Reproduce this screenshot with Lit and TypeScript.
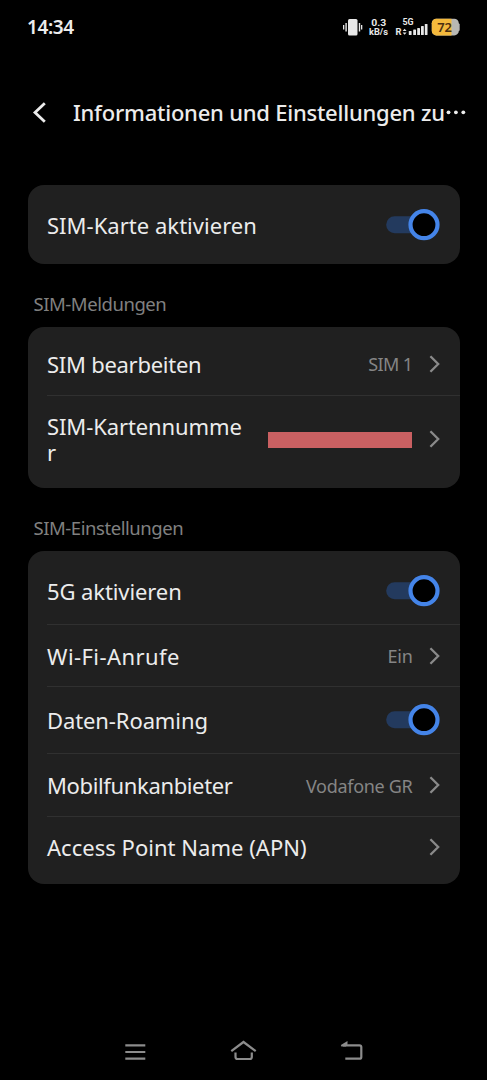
import { LitElement, html, css, nothing } from 'lit';
import { customElement, property } from 'lit/decorators.js';

@customElement('toggle-switch')
export class ToggleSwitch extends LitElement {
  static styles = css`
    :host { display: block; flex: none; }
    svg { display: block; }
  `;
  render() {
    return html`<svg width="54" height="32" viewBox="0 0 54 32">
      <rect x="0.2" y="7.2" width="44" height="17" rx="8.5" fill="#233a5e"></rect>
      <circle cx="38" cy="15.7" r="13.5" fill="#000" stroke="#4484e8" stroke-width="4.2"></circle>
    </svg>`;
  }
}

@customElement('settings-row')
export class SettingsRow extends LitElement {
  @property() kind: 'link' | 'toggle' = 'link';
  @property() value = '';
  @property({ type: Boolean }) redacted = false;

  static styles = css`
    :host { display: flex; align-items: center; box-sizing: border-box; padding-right: 19.5px; height: 62.3px; }
    :host([kind='toggle']) { height: 67px; }
    :host([redacted]) { height: 87.5px; }
    .label { flex: 1; white-space: nowrap; }
    :host([redacted]) .label { flex: none; width: 198px; white-space: normal; word-break: break-all; }
    .value { color: #858585; font-size: 18px; letter-spacing: -0.3px; padding-top: 1px; }
    :host([value='SIM 1']) .value { letter-spacing: -0.6px; }
    .mask { width: 144px; height: 16px; background: #ca6062; margin: 2px 0 0 auto; }
    .chevron { display: block; flex: none; margin-left: 15.5px; margin-right: 0; }
    .mask + .chevron { margin-left: 16px; }
  `;
  render() {
    return html`
      <div class="label"><slot></slot></div>
      ${this.value ? html`<div class="value">${this.value}</div>` : nothing}
      ${this.redacted ? html`<div class="mask"></div>` : nothing}
      ${this.kind === 'toggle'
        ? html`<toggle-switch></toggle-switch>`
        : html`<svg class="chevron" width="12" height="18" viewBox="0 0 12 18">
            <path d="M2.4 1.2 L10.2 9 L2.4 16.8" fill="none" stroke="#8a8a8a" stroke-width="2.3"></path>
          </svg>`}
    `;
  }
}

@customElement('app-root')
export class AppRoot extends LitElement {
  static styles = css`
    :host {
      display: flex; flex-direction: column; box-sizing: border-box;
      width: 487px; height: 1080px; overflow: hidden;
      background: #000; color: #ececec;
      font-family: 'Noto Sans', sans-serif;
    }
    .status { display: flex; align-items: center; height: 54px; padding: 0 26px 0 27px; box-sizing: border-box; }
    .clock { font-size: 19px; font-weight: 600; flex: 1; letter-spacing: -0.4px; }
    .icons { display: block; flex: none; }
    .header { display: flex; align-items: center; height: 118px; margin-bottom: 13.3px; padding-left: 32px; box-sizing: border-box; }
    .back { display: block; flex: none; }
    .title { margin-left: 26px; padding-bottom: 2px; font-size: 22px; font-weight: 500; letter-spacing: -0.23px; white-space: nowrap; }
    .dots { display: block; margin-left: 1px; flex: none; }
    .card { margin: 0 27.5px; padding: 6px 0 5.5px 19.5px; background: #202020; border-radius: 16px; font-size: 22px; line-height: 26px; letter-spacing: -0.1px; }
    .card.tall { padding-bottom: 6.3px; }
    .card settings-row + settings-row { border-top: 1px solid #303030; }
    .normal { letter-spacing: 0.03px; }
    .snug { letter-spacing: -0.27px; }
    .tight { letter-spacing: -0.36px; }
    .loose { letter-spacing: 0.42px; }
    .section { color: #808080; font-size: 18.5px; line-height: 26px; padding: 27px 0 10px 33.5px; letter-spacing: -0.45px; }
    .nav { display: block; margin-top: auto; flex: none; }
  `;

  render() {
    return html`
      <div class="status">
        <div class="clock">14:34</div>
        <svg class="icons" width="118" height="24" viewBox="343 15 118 24" font-family="Roboto" font-weight="700">
          <g fill="#e8e8e8">
            <rect x="348" y="19" width="9.5" height="16.5" rx="1.5"></rect>
            <rect x="345.4" y="23" width="1.4" height="8.5"></rect>
            <rect x="343" y="25" width="1.3" height="4.5"></rect>
            <rect x="358.8" y="23" width="1.4" height="8.5"></rect>
            <rect x="361" y="25" width="1.3" height="4.5"></rect>
            <text x="371.3" y="25.5" font-size="9" textLength="15" lengthAdjust="spacingAndGlyphs">0.3</text>
            <text x="369" y="34.8" font-size="9" textLength="19" lengthAdjust="spacingAndGlyphs">kB/s</text>
            <text x="402.5" y="25.3" font-size="8.8" textLength="11">5G</text>
            <text x="395.5" y="35" font-size="9.4">R</text>
            <path d="M402.6 31 L404.6 28.8 L406.6 31Z M402.6 32.4 L404.6 34.8 L406.6 32.4Z"></path>
            <rect x="408.8" y="31" width="2.8" height="4" rx=".6"></rect>
            <rect x="413.2" y="29.5" width="2.8" height="5.5" rx=".6"></rect>
            <rect x="417.2" y="28" width="2.8" height="7" rx=".6"></rect>
            <rect x="421" y="26" width="2.8" height="9" rx=".6"></rect>
            <rect x="424.8" y="24" width="2.7" height="11" rx=".6"></rect>
          </g>
          <rect x="457.5" y="23.5" width="2.2" height="7.5" rx="1" fill="#b0b0b0"></rect>
          <rect x="431.8" y="18.8" width="27" height="16.6" rx="4.5" fill="#b8b8b4"></rect>
          <path d="M436.3 18.800 H451.500 V35.400 H436.300 A4.500 4.500 0 0 1 431.800 30.900 V23.300 A4.500 4.500 0 0 1 436.300 18.800Z" fill="#f4b93c"></path>
          <text x="437.2" y="31.7" font-family="Noto Sans" font-size="13" font-weight="600" fill="#4a2e10">72</text>
        </svg>
      </div>
      <div class="header">
        <svg class="back" width="15" height="24" viewBox="32 101 15 24">
          <path d="M44.8 103.2 L35 112.5 L44.8 121.8" fill="none" stroke="#ececec" stroke-width="2.8"></path>
        </svg>
        <div class="title">Informationen und Einstellungen zu</div>
        <svg class="dots" width="20" height="6" viewBox="0 0 20 6" fill="#ececec">
          <circle cx="2.5" cy="2.3" r="1.9"></circle><circle cx="9.9" cy="2.3" r="1.9"></circle><circle cx="17.3" cy="2.3" r="1.9"></circle>
        </svg>
      </div>

      <div class="card">
        <settings-row class="normal" kind="toggle">SIM-Karte aktivieren</settings-row>
      </div>
      <div class="section">SIM-Meldungen</div>
      <div class="card">
        <settings-row class="snug" value="SIM 1">SIM bearbeiten</settings-row>
        <settings-row redacted>SIM-Kartennummer</settings-row>
      </div>
      <div class="section">SIM-Einstellungen</div>
      <div class="card tall">
        <settings-row kind="toggle">5G aktivieren</settings-row>
        <settings-row class="loose" value="Ein">Wi-Fi-Anrufe</settings-row>
        <settings-row kind="toggle">Daten-Roaming</settings-row>
        <settings-row class="tight" value="Vodafone GR">Mobilfunkanbieter</settings-row>
        <settings-row class="normal">Access Point Name (APN)</settings-row>
      </div>

      <svg class="nav" width="487" height="60" viewBox="0 1020 487 60" fill="none" stroke="#8c8c8c" stroke-width="2.2">
        <path d="M125.300 1045.300 H145.300 M125.300 1052 H145.300 M125.300 1058.700 H145.300"></path>
        <path d="M231.300 1051.200 L243.500 1042 L255.700 1051.200 M235.500 1052.500 V1057 Q235.500 1059 237.500 1059 H249.800 Q251.800 1059 251.800 1057 V1052.500"></path>
        <path d="M343 1045.300 H359.500 Q361.300 1045.300 361.300 1047.100 V1056.900 Q361.300 1058.700 359.500 1058.700 H345.300"></path>
        <path d="M340.900 1045 L347.500 1041 V1044.300 L346 1046.400 H341.300Z" fill="#8c8c8c" stroke="none"></path>
      </svg>
    `;
  }
}
